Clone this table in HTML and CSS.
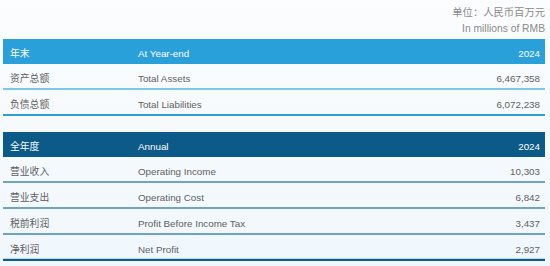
FILE: index.html
```html
<!DOCTYPE html>
<html lang="zh">
<head>
<meta charset="utf-8">
<link rel="stylesheet" href="styles.css">
</head>
<body>
<div class="page">
  <div class="unit">
    <div>单位：人民币百万元</div>
    <div>In millions of RMB</div>
  </div>
  <div class="table sec-a">
    <div class="row head"><span>年末</span><span>At Year-end</span><span class="num">2024</span></div>
    <div class="row"><span>资产总额</span><span>Total Assets</span><span class="num">6,467,358</span></div>
    <div class="row last"><span>负债总额</span><span>Total Liabilities</span><span class="num">6,072,238</span></div>
  </div>
  <div class="table sec-b">
    <div class="row head"><span>全年度</span><span>Annual</span><span class="num">2024</span></div>
    <div class="row"><span>营业收入</span><span>Operating Income</span><span class="num">10,303</span></div>
    <div class="row"><span>营业支出</span><span>Operating Cost</span><span class="num">6,842</span></div>
    <div class="row"><span>税前利润</span><span>Profit Before Income Tax</span><span class="num">3,437</span></div>
    <div class="row last"><span>净利润</span><span>Net Profit</span><span class="num">2,927</span></div>
  </div>
</div>
</body>
</html>
```
FILE: styles.css
```css
html, body {
  margin: 0;
  padding: 0;
  background: #f4f9fd;
}
body {
  font-family: "Liberation Sans", "Noto Sans CJK SC", sans-serif;
  color: #666;
}
.page {
  width: 550px;
  height: 266px;
  padding: 0 5px 0 3px;
  box-sizing: border-box;
  background: linear-gradient(#fbfdfe, #f0f7fc);
}
.unit {
  text-align: right;
  font-size: 10.3px;
  line-height: 16px;
  color: #8a8a8a;
  padding-top: 5px;
  height: 39px;
  box-sizing: border-box;
}
.table {
  display: flex;
  flex-direction: column;
}
.sec-b {
  margin-top: 16px;
}
.row {
  display: grid;
  grid-template-columns: 128px 1fr auto;
  align-items: center;
  height: 26px;
  padding: 4px 5px 0 7px;
  box-sizing: border-box;
  font-size: 9.8px;
  color: #5f5f5f;
}
.row.head {
  height: 25px;
  padding-top: 3px;
  color: #fff;
}
.sec-a .row.head { background: #2aa0da; }
.sec-b .row.head { background: #0b5a88; }
.sec-a .row { border-bottom: 2px solid #7ec7ec; }
.sec-a .row.last { border-bottom: 2px solid #2c9fd8; }
.sec-a .row.head { border-bottom: none; }
.sec-b .row { border-bottom: 2px solid #6fa3c6; }
.sec-b .row.head { border-bottom: none; }
.sec-b .row.last { border-bottom: 2px solid #0d5c8a; box-shadow: 0 -1px 0 #b9d6ea inset; }
.num { text-align: right; }
```
